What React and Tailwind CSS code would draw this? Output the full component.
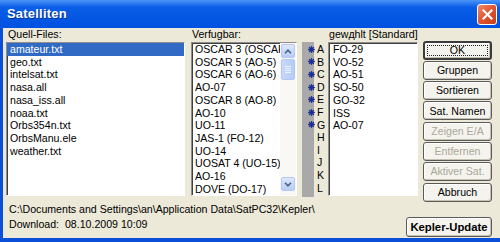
import React from 'react'

const font = { fontFamily: '"Liberation Sans", Arial, sans-serif' }

const quellFiles = ['amateur.txt', 'geo.txt', 'intelsat.txt', 'nasa.all', 'nasa_iss.all', 'noaa.txt', 'Orbs354n.txt', 'OrbsManu.ele', 'weather.txt']
const verfugbar = ['OSCAR 3 (OSCAR 3)', 'OSCAR 5 (AO-5)', 'OSCAR 6 (AO-6)', 'AO-07', 'OSCAR 8 (AO-8)', 'AO-10', 'UO-11', 'JAS-1 (FO-12)', 'UO-14', 'UOSAT 4 (UO-15)', 'AO-16', 'DOVE (DO-17)']
const gewaehlt = ['FO-29', 'VO-52', 'AO-51', 'SO-50', 'GO-32', 'ISS', 'AO-07']
const letters = ['A', 'B', 'C', 'D', 'E', 'F', 'G', 'H', 'I', 'J', 'K', 'L']

const Star = () => (
    <svg width="7" height="7" viewBox="0 0 8 8" stroke="#1c2f94" strokeWidth="1.6" strokeLinecap="round">
        <line x1="4" y1="0.8" x2="4" y2="7.2" />
        <line x1="0.8" y1="4" x2="7.2" y2="4" />
        <line x1="1.7" y1="1.7" x2="6.3" y2="6.3" />
        <line x1="6.3" y1="1.7" x2="1.7" y2="6.3" />
    </svg>
)

const Btn = ({ children, disabled, focused }) => (
    <div className={`relative h-[19px] w-[69px] flex items-center justify-center rounded-[3px] bg-[#f4f3ee] shadow-[inset_-1px_-1px_0_#c5c2b2,inset_1px_1px_0_#ffffff] ${focused ? 'border-2 border-[#3b3b3b]' : 'border border-[#5a5a5a]'} ${disabled ? 'text-[#aca899]' : 'text-black'}`}>
        {focused && <div className="absolute inset-[2px] border border-dotted border-[#222]" />}
        <span className="leading-none">{children}</span>
    </div>
)

const ListBox = ({ className, children }) => (
    <div className={`bg-white border border-[#8e8e8e] border-b-white border-r-white shadow-[inset_1px_1px_0_#404040] overflow-hidden ${className}`}>
        {children}
    </div>
)

export default function App() {
    return (
        <div className="w-[500px] h-[242px] flex flex-col overflow-hidden text-[10.6px] text-black" style={font}>
            {/* Title bar */}
            <div className="h-[28px] shrink-0 flex items-center justify-between pl-[7px] pr-[3px] bg-linear-to-b from-[#4a95f7] via-[#0a5de6] via-25% to-[#0052e0]">
                <span className="text-white font-bold text-[13px] tracking-[0.2px] [text-shadow:1px_1px_0_#0a2f8f]">Satelliten</span>
                <div className="w-[20px] h-[21px] rounded-[3px] border border-white bg-linear-to-br from-[#f08a68] via-[#e0532f] to-[#c23d1e] flex items-center justify-center">
                    <svg width="11" height="11" viewBox="0 0 11 11" stroke="white" strokeWidth="2.2" strokeLinecap="square">
                        <line x1="1.5" y1="1.5" x2="9.5" y2="9.5" />
                        <line x1="9.5" y1="1.5" x2="1.5" y2="9.5" />
                    </svg>
                </div>
            </div>

            {/* Body */}
            <div className="flex-1 flex flex-col bg-[#ece9d8] border-l-[3px] border-b-[4px] border-[#0b4fd8]">
                <div className="h-[174px] flex pl-[3px]">
                    {/* Quell-Files */}
                    <div className="w-[179px] flex flex-col">
                        <div className="h-[14px] leading-[13px] pl-[2px]">Quell-Files:</div>
                        <ListBox className="h-[154px]">
                            <div className="leading-[12.7px]">
                                {quellFiles.map((f, i) => (
                                    <div key={f} className={`pl-[3px] ${i === 0 ? 'bg-[#316ac5] text-white' : ''}`}>{f}</div>
                                ))}
                            </div>
                        </ListBox>
                    </div>

                    {/* Verfugbar */}
                    <div className="w-[106px] ml-[6px] flex flex-col">
                        <div className="h-[14px] leading-[13px] pl-[1px]">Verfugbar:</div>
                        <ListBox className="h-[154px] flex">
                            <div className="flex-1 min-w-0 leading-[12.7px] pl-[3px]">
                                {verfugbar.map((s) => (
                                    <div key={s} className="whitespace-nowrap overflow-hidden">{s}</div>
                                ))}
                            </div>
                            <div className="w-[16px] shrink-0 bg-[#f9f8f4] flex flex-col justify-between py-[1px]">
                                <div className="flex flex-col gap-[1px]">
                                    <div className="h-[14px] mx-[1px] rounded-[2px] bg-linear-to-b from-[#dde7fd] to-[#b9cdf8] border border-[#b4c7f2] flex items-center justify-center">
                                        <svg width="8" height="5" viewBox="0 0 8 5" fill="none" stroke="#4d6185" strokeWidth="1.6"><path d="M1 4.2 L4 1.2 L7 4.2" /></svg>
                                    </div>
                                    <div className="h-[21px] mx-[1px] rounded-[2px] bg-linear-to-r from-[#c9d8fb] to-[#b6cbf7] border border-[#b4c7f2] flex flex-col items-center justify-center gap-[1px]">
                                        {[0, 1, 2, 3].map(i => <div key={i} className="w-[6px] h-[1px] bg-[#eef3fe]" />)}
                                    </div>
                                </div>
                                <div className="h-[14px] mx-[1px] mb-[3px] rounded-[2px] bg-linear-to-b from-[#dde7fd] to-[#b9cdf8] border border-[#b4c7f2] flex items-center justify-center">
                                    <svg width="8" height="5" viewBox="0 0 8 5" fill="none" stroke="#4d6185" strokeWidth="1.6"><path d="M1 0.8 L4 3.8 L7 0.8" /></svg>
                                </div>
                            </div>
                        </ListBox>
                    </div>

                    {/* gewählt */}
                    <div className="ml-[5px] flex flex-col">
                        <div className="h-[14px] leading-[13px] pl-[27px] whitespace-nowrap">gewдhlt [Standard]</div>
                        <div className="flex h-[155px]">
                            <div className="w-[12px] bg-[#a9a9a9] flex flex-col items-end pt-[1px] leading-[12.6px]">
                                {letters.map((l, i) => (
                                    <div key={l} className="h-[12.6px] flex items-center -mr-[1px]">{i < 7 && <Star />}</div>
                                ))}
                            </div>
                            <div className="w-[11px] pl-[3px] pt-[1px] leading-[12.6px]">
                                {letters.map(l => <div key={l} className="h-[12.6px]">{l}</div>)}
                            </div>
                            <ListBox className="w-[90px] h-[154px] ml-[3px]">
                                <div className="leading-[12.7px] pl-[4px]">
                                    {gewaehlt.map(s => <div key={s}>{s}</div>)}
                                </div>
                            </ListBox>
                        </div>
                    </div>

                    {/* Buttons */}
                    <div className="ml-[5px] pt-[12.5px] flex flex-col gap-[1.3px]">
                        <Btn focused>OK</Btn>
                        <Btn>Gruppen</Btn>
                        <Btn>Sortieren</Btn>
                        <Btn>Sat. Namen</Btn>
                        <Btn disabled>Zeigen E/A</Btn>
                        <Btn disabled>Entfernen</Btn>
                        <Btn disabled>Aktiver Sat.</Btn>
                        <Btn>Abbruch</Btn>
                    </div>
                </div>

                {/* Bottom */}
                <div className="flex justify-between pl-[6px] pr-[8px]">
                    <div className="leading-[15px] whitespace-pre">
                        <div>{'C:\\Documents and Settings\\an\\Application Data\\SatPC32\\Kepler\\'}</div>
                        <div>{'Download:  08.10.2009 10:09'}</div>
                    </div>
                    <div className="mt-[15px] h-[20px] w-[86px] flex items-center justify-center rounded-[3px] border border-[#5a5a5a] bg-[#f4f3ee] shadow-[inset_-1px_-1px_0_#c5c2b2,inset_1px_1px_0_#ffffff] font-bold text-[11.3px]">
                        Kepler-Update
                    </div>
                </div>
            </div>
        </div>
    )
}
